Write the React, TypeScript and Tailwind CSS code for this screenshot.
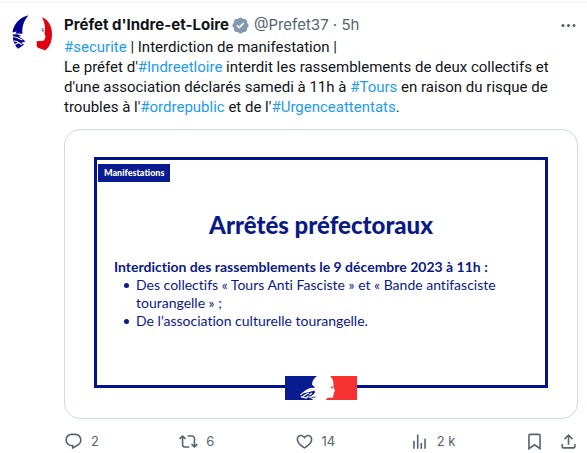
import type { ReactNode } from "react";
import clsx from "clsx";

const ICONS = {
  reply:
    "M1.751 10c0-4.42 3.584-8 8.005-8h4.366c4.49 0 8.129 3.64 8.129 8.13 0 2.96-1.607 5.68-4.196 7.11l-8.054 4.46v-3.69h-.067c-4.49.1-8.183-3.51-8.183-8.01zm8.005-6c-3.317 0-6.005 2.69-6.005 6 0 3.37 2.77 6.08 6.138 6.01l.351-.01h1.761v2.3l5.087-2.81c1.951-1.08 3.163-3.13 3.163-5.36 0-3.39-2.744-6.13-6.129-6.13H9.756z",
  repost:
    "M4.5 3.88l4.432 4.14-1.364 1.46L5.5 7.55V16c0 1.1.896 2 2 2H13v2H7.5c-2.209 0-4-1.79-4-4V7.55L1.432 9.48.068 8.02 4.5 3.88zM16.5 6H11V4h5.5c2.209 0 4 1.79 4 4v8.45l2.068-1.93 1.364 1.46-4.432 4.14-4.432-4.14 1.364-1.46 2.068 1.93V8c0-1.1-.896-2-2-2z",
  like: "M16.697 5.5c-1.222-.06-2.679.51-3.89 2.16l-.805 1.09-.806-1.09C9.984 6.01 8.526 5.44 7.304 5.5c-1.243.07-2.349.78-2.91 1.91-.552 1.12-.633 2.78.479 4.82 1.074 1.97 3.257 4.27 7.129 6.61 3.87-2.34 6.052-4.64 7.126-6.61 1.111-2.04 1.03-3.7.477-4.82-.561-1.13-1.666-1.84-2.908-1.91zm4.187 7.69c-1.351 2.48-4.001 5.12-8.379 7.67l-.503.3-.504-.3c-4.379-2.55-7.029-5.19-8.382-7.67-1.36-2.5-1.41-4.86-.514-6.67.887-1.79 2.647-2.91 4.601-3.01 1.651-.09 3.368.56 4.798 2.01 1.429-1.45 3.146-2.1 4.796-2.01 1.954.1 3.714 1.22 4.601 3.01.896 1.81.846 4.17-.514 6.67z",
  views:
    "M8.75 21V3h2v18h-2zM18 21V8.5h2V21h-2zM4 21l.004-10h2L6 21H4zm9.248 0v-7h2v7h-2z",
  bookmark:
    "M4 4.5C4 3.12 5.119 2 6.5 2h11C18.881 2 20 3.12 20 4.5v18.44l-8-5.71-8 5.71V4.5zM6.5 4c-.276 0-.5.22-.5.5v14.56l6-4.29 6 4.29V4.5c0-.28-.224-.5-.5-.5h-11z",
  share:
    "M12 2.59l5.7 5.7-1.41 1.42L13 6.41V16h-2V6.41l-3.3 3.3-1.41-1.42L12 2.59zM21 15l-.02 3.51c0 1.38-1.12 2.49-2.5 2.49H5.5C4.11 21 3 19.88 3 18.5V15h2v3.5c0 .28.22.5.5.5h12.98c.28 0 .5-.22.5-.5L19 15h2z",
  more: "M3 12c0-1.1.9-2 2-2s2 .9 2 2-.9 2-2 2-2-.9-2-2zm9 2c1.1 0 2-.9 2-2s-.9-2-2-2-2 .9-2 2 .9 2 2 2zm7 0c1.1 0 2-.9 2-2s-.9-2-2-2-2 .9-2 2 .9 2 2 2z",
};

type IconName = keyof typeof ICONS;

function Icon({ name, className }: { name: IconName; className?: string }) {
  return (
    <svg
      viewBox="0 0 24 24"
      className={clsx("size-[19px] shrink-0 fill-current", className)}
      aria-hidden
    >
      <path d={ICONS[name]} />
    </svg>
  );
}

function VerifiedBadge() {
  return (
    <svg
      viewBox="0 0 22 22"
      className="size-[19px] shrink-0 fill-[#829aab]"
      role="img"
      aria-label="Compte certifié"
    >
      <path d="M20.396 11c-.018-.646-.215-1.275-.57-1.816-.354-.54-.852-.972-1.438-1.246.223-.607.27-1.264.14-1.897-.131-.634-.437-1.218-.882-1.687-.47-.445-1.053-.75-1.687-.882-.633-.13-1.29-.083-1.897.14-.273-.587-.704-1.086-1.245-1.44S11.647 1.62 11 1.604c-.646.017-1.273.213-1.813.568s-.969.854-1.24 1.44c-.608-.223-1.267-.272-1.902-.14-.635.13-1.22.436-1.69.882-.445.47-.749 1.055-.878 1.688-.13.633-.08 1.29.144 1.896-.587.274-1.087.705-1.443 1.245-.356.54-.555 1.17-.574 1.817.02.647.218 1.276.574 1.817.356.54.856.972 1.443 1.245-.224.606-.274 1.263-.144 1.896.13.634.433 1.218.877 1.688.47.443 1.054.747 1.687.878.633.132 1.29.084 1.897-.136.274.586.705 1.084 1.246 1.439.54.354 1.17.551 1.816.569.647-.016 1.276-.213 1.817-.567s.972-.854 1.245-1.44c.604.239 1.266.296 1.903.164.636-.132 1.22-.447 1.68-.907.46-.46.776-1.044.908-1.681s.075-1.299-.165-1.903c.586-.274 1.084-.705 1.439-1.246.354-.54.551-1.17.569-1.816zM9.662 14.85l-3.429-3.428 1.293-1.302 2.072 2.072 4.4-4.794 1.347 1.246z" />
    </svg>
  );
}

function Avatar() {
  return (
    <svg viewBox="0 0 40 40" className="size-10" role="img" aria-label="Préfet d'Indre-et-Loire">
      <path
        fill="#000091"
        d="M16.500.3C8 2 1.500 9 .5 17.500l4-1-1 2 7 .3C9.500 13 11.500 6 16.500.3z"
      />
      <path
        fill="#000091"
        d="M.8 19.500l4.500-.3 4.200 1.800-3 .5 3.500 2 3.500 3-4.500 1.200 3 1.800-2.500 2-3.500 2.200C3.500 31.500 1.800 28 1 24z"
      />
      <path
        fill="none"
        stroke="#fff"
        strokeWidth="1.100"
        d="M.5 21.800c4-.3 5.500 1.700 10 3.200M2 26c3-.5 5 2 8 3.800M2.500 29.500l4-1.500"
      />
      <path
        fill="#e1000f"
        d="M30 2.300C37 5 40 12 40 19c0 7-2 13-7 16.500-2.500-1.800-5-1.500-7.500-3l-1-2 .5-2.500-1-1c2-2 5-.5 8-1.500l1.500-3.500-1-4 .5-4c0-5-1.500-8.700-3-11.700z"
      />
      <path fill="#777" d="M29 13.500h3v1h-3zM30 15h2v1.500h-2z" />
    </svg>
  );
}

// Marianne drawn over the blue, white and red bands
function FlagLogo({ className }: { className?: string }) {
  return (
    <svg viewBox="0 0 72 24" className={className} role="img" aria-label="République française">
      <path fill="#fff" d="M0 0h72v24H0z" />
      <path
        fill="#0a1a90"
        d="M0 0h32c-3 2-5 5-5 8.500l3 3-5 1.500-8.500 4.500 5.500-1 8-2-1 3.500-5.500 3 5 3H0z"
      />
      <path fill="none" stroke="#fff" strokeWidth="1.200" d="M28 12.500c-5-.5-8 3-12.500 6.500M24 17c-3 .5-5 3.500-7.500 4.500M16 20.500l5 1.500 6-5" />
      <path
        fill="none"
        stroke="#0a1a90"
        strokeWidth=".8"
        d="M22 19l4 1 4-4M26 22c1.500-.5 3-1 4.500-1"
      />
      <path
        fill="#f5322f"
        d="M45 0h27v24H41c.5-2 2-2.500 5.500-2.200 2 0 2-1.300 1.800-2.800l.7-1.500-.3-1.500 1.500-1-1.500-3c-.5-1-.2-2-.2-3.500C48.500 5 47.500 2 45 0z"
      />
      <path fill="#888" d="M45.500 10.500h2.500v2h-2z" />
    </svg>
  );
}

function Hashtag({ tag }: { tag: string }) {
  return (
    <a href={`#${tag}`} className="text-[#1d9bf0] hover:underline">
      #{tag}
    </a>
  );
}

function Bullet({ children }: { children: ReactNode }) {
  return (
    <li className="flex gap-[7px]">
      <span className="mt-[7px] size-[5px] shrink-0 rounded-full bg-current" />
      <span>{children}</span>
    </li>
  );
}

function Poster() {
  return (
    <figure className="rounded-2xl border border-[#cfd9de] px-[29px] pt-[27px] pb-[30px] font-['Lato',sans-serif] text-[#0a1a85] [font-variant-ligatures:none]">
      <div className="relative border-3 border-[#04128a] px-px pt-1 pb-[55px]">
        <p className="w-fit bg-[#0a1a90] px-[6px] text-[9px] leading-[18px] font-black text-white">
          Manifestations
        </p>
        <h2 className="mt-[27px] text-center text-[24px] leading-8 font-black">
          Arrêtés préfectoraux
        </h2>
        <div className="mt-[17px] pl-4 text-[14px] leading-[18px]">
          <p className="font-bold">
            Interdiction des rassemblements le 9 décembre 2023 à 11h :
          </p>
          <ul className="pl-[10px]">
            <Bullet>
              Des collectifs « Tours Anti Fasciste » et « Bande antifasciste
              <br />
              tourangelle » ;
            </Bullet>
            <Bullet>De l’association culturelle tourangelle.</Bullet>
          </ul>
        </div>
        <FlagLogo className="absolute -bottom-[15px] left-1/2 h-6 w-[72px] -translate-x-1/2" />
      </div>
    </figure>
  );
}

type ActionProps = {
  icon: IconName;
  label: string;
  children?: ReactNode;
};

function Action({ icon, label, children }: ActionProps) {
  return (
    <button type="button" aria-label={label} className="flex items-center gap-2">
      <Icon name={icon} />
      {children ? <span>{children}</span> : null}
    </button>
  );
}

export default function App() {
  return (
    <article className="mt-[2px] flex gap-3 border-t border-[#eff3f4] bg-white pt-3 pr-[9px] pl-3 font-['Inter',sans-serif] text-[15px] leading-5 text-[#0f1419]">
      <a href="#Prefet37" className="size-10 shrink-0">
        <Avatar />
      </a>
      <div className="min-w-0 flex-1">
        <header className="flex items-center justify-between">
          <div className="flex items-center gap-1">
            <a href="#Prefet37" className="flex items-center gap-[2px] font-bold">
              Préfet d'Indre-et-Loire
              <VerifiedBadge />
            </a>
            <span className="text-[#536471]">@Prefet37 · 5h</span>
          </div>
          <button type="button" aria-label="Plus" className="text-[#536471]">
            <Icon name="more" />
          </button>
        </header>

        <p className="mt-[2px] font-['Roboto',sans-serif]">
          <Hashtag tag="securite" /> | Interdiction de manifestation |
          <br />
          Le préfet d'
          <Hashtag tag="Indreetloire" /> interdit les rassemblements de deux
          collectifs et
          <br />
          d'une association déclarés samedi à 11h à{" "}
          <Hashtag tag="Tours" /> en raison du risque de
          <br />
          troubles à l'
          <Hashtag tag="ordrepublic" /> et de l'
          <Hashtag tag="Urgenceattentats" />.
        </p>

        <div className="mt-3">
          <Poster />
        </div>

        <footer className="mt-3 flex items-center text-[13px] text-[#536471]">
          <div className="grid flex-1 grid-cols-4">
            <Action icon="reply" label="Répondre">2</Action>
            <Action icon="repost" label="Reposter">6</Action>
            <Action icon="like" label="J'aime">14</Action>
            <Action icon="views" label="Vues">2 k</Action>
          </div>
          <div className="flex gap-[15px]">
            <Action icon="bookmark" label="Signet" />
            <Action icon="share" label="Partager" />
          </div>
        </footer>
      </div>
    </article>
  );
}
